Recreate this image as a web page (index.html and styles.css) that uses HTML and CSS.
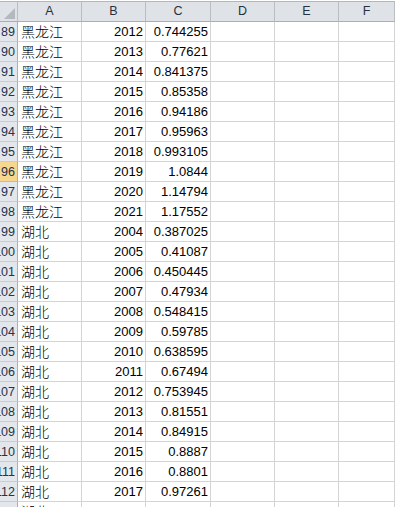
FILE: index.html
```html
<!DOCTYPE html>
<html>
<head>
<meta charset="utf-8">
<link rel="stylesheet" href="styles.css">
</head>
<body>
<div class="sheet">
  <div class="row head">
    <div class="corner"><span class="tri"></span></div>
    <div class="ch">A</div><div class="ch">B</div><div class="ch">C</div><div class="ch">D</div><div class="ch">E</div><div class="ch">F</div>
  </div>
  <div class="row"><div class="rh">89</div><div class="c t">黑龙江</div><div class="c n">2012</div><div class="c n">0.744255</div><div class="c"></div><div class="c"></div><div class="c"></div></div>
  <div class="row"><div class="rh">90</div><div class="c t">黑龙江</div><div class="c n">2013</div><div class="c n">0.77621</div><div class="c"></div><div class="c"></div><div class="c"></div></div>
  <div class="row"><div class="rh">91</div><div class="c t">黑龙江</div><div class="c n">2014</div><div class="c n">0.841375</div><div class="c"></div><div class="c"></div><div class="c"></div></div>
  <div class="row"><div class="rh">92</div><div class="c t">黑龙江</div><div class="c n">2015</div><div class="c n">0.85358</div><div class="c"></div><div class="c"></div><div class="c"></div></div>
  <div class="row"><div class="rh">93</div><div class="c t">黑龙江</div><div class="c n">2016</div><div class="c n">0.94186</div><div class="c"></div><div class="c"></div><div class="c"></div></div>
  <div class="row"><div class="rh">94</div><div class="c t">黑龙江</div><div class="c n">2017</div><div class="c n">0.95963</div><div class="c"></div><div class="c"></div><div class="c"></div></div>
  <div class="row"><div class="rh">95</div><div class="c t">黑龙江</div><div class="c n">2018</div><div class="c n">0.993105</div><div class="c"></div><div class="c"></div><div class="c"></div></div>
  <div class="row"><div class="rh sel">96</div><div class="c t">黑龙江</div><div class="c n">2019</div><div class="c n">1.0844</div><div class="c"></div><div class="c"></div><div class="c"></div></div>
  <div class="row"><div class="rh">97</div><div class="c t">黑龙江</div><div class="c n">2020</div><div class="c n">1.14794</div><div class="c"></div><div class="c"></div><div class="c"></div></div>
  <div class="row"><div class="rh">98</div><div class="c t">黑龙江</div><div class="c n">2021</div><div class="c n">1.17552</div><div class="c"></div><div class="c"></div><div class="c"></div></div>
  <div class="row"><div class="rh">99</div><div class="c t">湖北</div><div class="c n">2004</div><div class="c n">0.387025</div><div class="c"></div><div class="c"></div><div class="c"></div></div>
  <div class="row"><div class="rh">100</div><div class="c t">湖北</div><div class="c n">2005</div><div class="c n">0.41087</div><div class="c"></div><div class="c"></div><div class="c"></div></div>
  <div class="row"><div class="rh">101</div><div class="c t">湖北</div><div class="c n">2006</div><div class="c n">0.450445</div><div class="c"></div><div class="c"></div><div class="c"></div></div>
  <div class="row"><div class="rh">102</div><div class="c t">湖北</div><div class="c n">2007</div><div class="c n">0.47934</div><div class="c"></div><div class="c"></div><div class="c"></div></div>
  <div class="row"><div class="rh">103</div><div class="c t">湖北</div><div class="c n">2008</div><div class="c n">0.548415</div><div class="c"></div><div class="c"></div><div class="c"></div></div>
  <div class="row"><div class="rh">104</div><div class="c t">湖北</div><div class="c n">2009</div><div class="c n">0.59785</div><div class="c"></div><div class="c"></div><div class="c"></div></div>
  <div class="row"><div class="rh">105</div><div class="c t">湖北</div><div class="c n">2010</div><div class="c n">0.638595</div><div class="c"></div><div class="c"></div><div class="c"></div></div>
  <div class="row"><div class="rh">106</div><div class="c t">湖北</div><div class="c n">2011</div><div class="c n">0.67494</div><div class="c"></div><div class="c"></div><div class="c"></div></div>
  <div class="row"><div class="rh">107</div><div class="c t">湖北</div><div class="c n">2012</div><div class="c n">0.753945</div><div class="c"></div><div class="c"></div><div class="c"></div></div>
  <div class="row"><div class="rh">108</div><div class="c t">湖北</div><div class="c n">2013</div><div class="c n">0.81551</div><div class="c"></div><div class="c"></div><div class="c"></div></div>
  <div class="row"><div class="rh">109</div><div class="c t">湖北</div><div class="c n">2014</div><div class="c n">0.84915</div><div class="c"></div><div class="c"></div><div class="c"></div></div>
  <div class="row"><div class="rh">110</div><div class="c t">湖北</div><div class="c n">2015</div><div class="c n">0.8887</div><div class="c"></div><div class="c"></div><div class="c"></div></div>
  <div class="row"><div class="rh">111</div><div class="c t">湖北</div><div class="c n">2016</div><div class="c n">0.8801</div><div class="c"></div><div class="c"></div><div class="c"></div></div>
  <div class="row"><div class="rh">112</div><div class="c t">湖北</div><div class="c n">2017</div><div class="c n">0.97261</div><div class="c"></div><div class="c"></div><div class="c"></div></div>
  <div class="row"><div class="rh">113</div><div class="c t">湖北</div><div class="c n"></div><div class="c n"></div><div class="c"></div><div class="c"></div><div class="c"></div></div>
</div>
</body>
</html>
```

FILE: styles.css
```css
* { box-sizing: border-box; }
html, body {
  margin: 0;
  padding: 0;
  background: #ffffff;
  overflow: hidden;
}
.sheet {
  width: 395px;
  height: 507px;
  overflow: hidden;
  font-family: "Liberation Sans", "Noto Sans CJK SC", sans-serif;
  color: #000;
}
.row {
  display: grid;
  grid-template-columns: 18px 64px 64px 65px 64px 64px 1fr;
  height: 20px;
}
.row.head {
  margin-top: 1px;
  height: 21px;
}
.head > div {
  background: #dfe3e8;
  border-top: 1px solid #b1b7be;
  border-bottom: 1px solid #a9afb6;
  border-right: 1px solid #b9bec4;
}
.corner {
  position: relative;
}
.tri {
  position: absolute;
  right: 2px;
  bottom: 2px;
  width: 0;
  height: 0;
  border-left: 11px solid transparent;
  border-bottom: 11px solid #b4b9bf;
}
.ch {
  text-align: center;
  font-size: 12.5px;
  line-height: 19px;
  color: #27313d;
}
.rh {
  background: #e3e7ec;
  border-right: 1px solid #a9afb6;
  border-bottom: 1px solid #c9cdd2;
  font-size: 12.5px;
  line-height: 18px;
  padding-top: 1px;
  padding-right: 2px;
  color: #24324a;
  overflow: hidden;
  white-space: nowrap;
  display: flex;
  justify-content: flex-end;
}
.rh.sel {
  background: #f7d68f;
  border-bottom-color: #e2b85c;
  border-right-color: #d9a944;
}
.c {
  border-right: 1px solid #d4d4d4;
  border-bottom: 1px solid #d4d4d4;
  padding-top: 1px;
  line-height: 18px;
  font-size: 13px;
  white-space: nowrap;
  overflow: hidden;
}
.c.t {
  font-size: 14px;
  font-weight: 300;
  padding-left: 3px;
}
.c.n {
  text-align: right;
  padding-right: 2px;
}
```
